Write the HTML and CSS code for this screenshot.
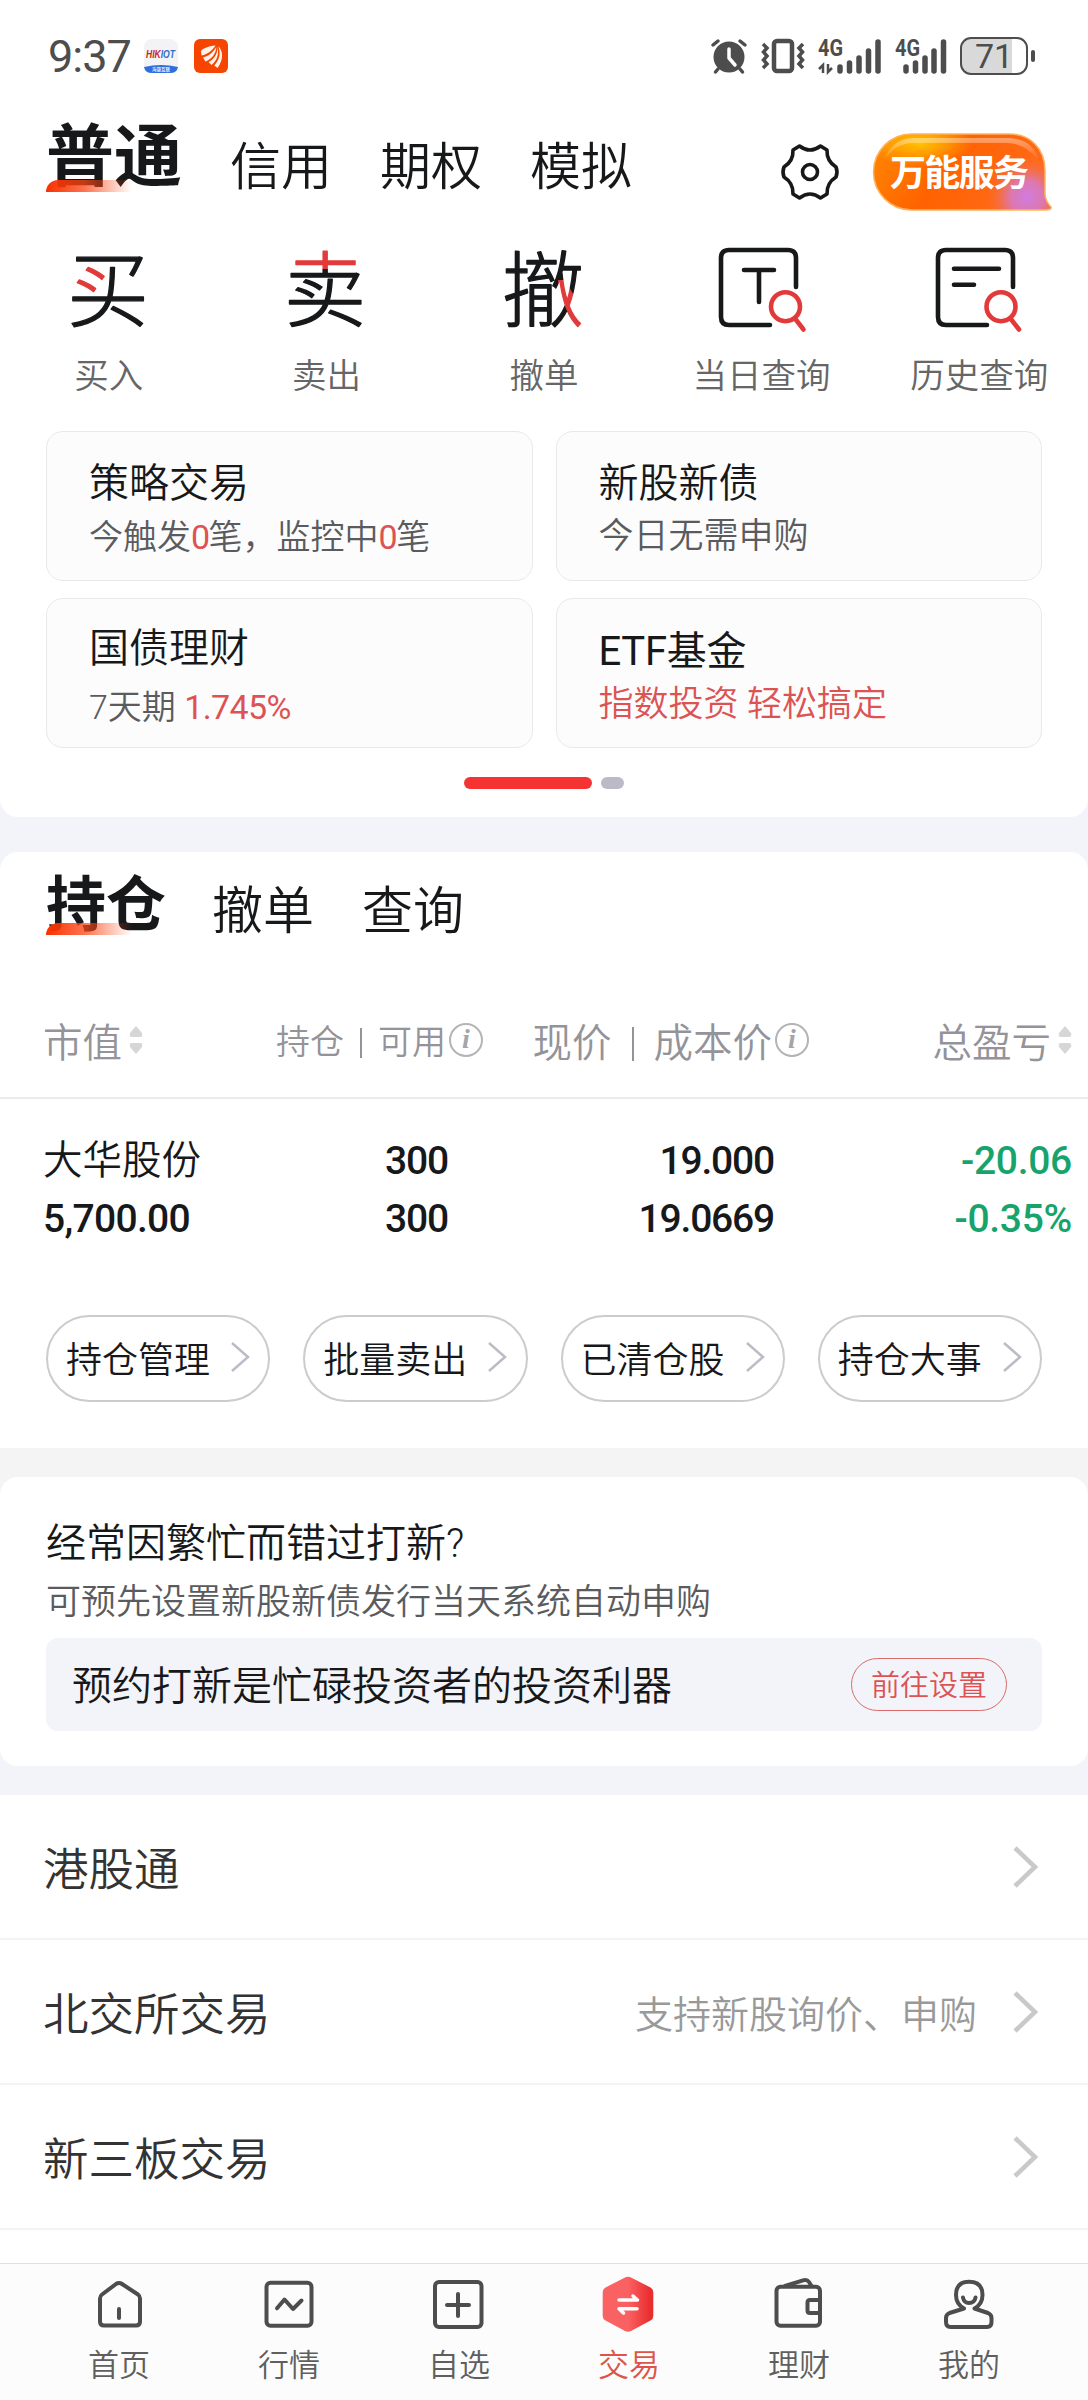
FILE: index.html
```html
<!DOCTYPE html>
<html lang="zh-CN">
<head>
    <meta charset="UTF-8">
    <meta name="viewport" content="width=device-width, initial-scale=1.0">
    <title>交易</title>
    <link rel="stylesheet" href="styles.css">
</head>
<body>
    <div class="panel top-panel">
        <div class="status-bar">
            <span class="time">9:37</span>
            <svg class="app-icon" width="34" height="34" viewBox="0 0 34 34">
                <rect width="34" height="34" rx="8" fill="#f3f3f5"/>
                <path d="M0 28 Q17 24 34 28 Q33 34 26 34 H8 Q1 34 0 28 Z" fill="#2f6fdd"/>
                <text x="2" y="19" class="hik" textLength="29" lengthAdjust="spacingAndGlyphs"><tspan fill="#c8281e">HIK</tspan><tspan fill="#2f6fc8">IOT</tspan></text>
                <text x="17" y="32" class="hik-sub" text-anchor="middle">海康互联</text>
            </svg>
            <svg class="app-icon app-orange" width="34" height="34" viewBox="0 0 34 34">
                <rect width="34" height="34" rx="6" fill="#f64500"/>
                <g fill="#fff3ec">
                    <path d="M21.500 6.500 C14 7 8 10 7 12 L7.500 16.500 C13 15.500 18 12 21.500 6.500Z"/>
                    <path d="M22.300 8 C19 13.500 15 17 9 18.500 L11.500 22.500 C18 20 22 14.500 22.300 8Z"/>
                    <path d="M23.300 8 C24 14.500 20 20.500 14.500 23 L17.500 26 C23 22 25.500 14 23.300 8Z"/>
                    <path d="M24.300 7 C29 12 30 20 23.500 29 L20.300 26.500 C26 20 26.800 14 24.300 7Z"/>
                </g>
            </svg>
            <div class="status-right">
                <svg class="alarm" width="36" height="36" viewBox="0 0 36 36" fill="none" stroke="#4d4d4d" stroke-linecap="round">
                    <circle cx="18" cy="19" r="15.500" fill="#4d4d4d" stroke="none"/>
                    <path d="M2 7 L7 3 M34 7 L29 3" stroke-width="3.500"/>
                    <path d="M7 31 L4.500 34 M29 31 L31.500 34" stroke-width="3.500"/>
                    <path d="M18 11 V20 L24 27" stroke="#fff" stroke-width="3.500" stroke-linejoin="round"/>
                </svg>
                <svg class="vibrate" width="44" height="36" viewBox="0 0 44 36" fill="none" stroke="#4d4d4d" stroke-width="4.500">
                    <rect x="13" y="3" width="18" height="30" rx="3"/>
                    <path d="M2 6 L6 10 L2.500 14 L6 18 L2.500 22 L6 26 L2 30 M42 6 L38 10 L41.500 14 L38 18 L41.500 22 L38 26 L42 30" stroke-width="3.500"/>
                </svg>
                <svg class="signal" width="63" height="36" viewBox="0 0 63 36">
                    <text x="0" y="18" class="net" textLength="25" lengthAdjust="spacingAndGlyphs">4G</text>
                    <path d="M5 35 V27 L1 31 M10 26 V34 L14 30" fill="none" stroke="#4d4d4d" stroke-width="2.500"/>
                    <path d="M22 29 V33 M31.500 25 V33 M41 20 V33 M50.500 13 V33 M60 4 V33" stroke="#4d4d4d" stroke-width="5.500" stroke-linecap="round"/>
                </svg>
                <svg class="signal-two" width="52" height="36" viewBox="0 0 52 36">
                    <text x="0" y="18" class="net" textLength="25" lengthAdjust="spacingAndGlyphs">4G</text>
                    <path d="M11 29 V33 M20.500 25 V33 M30 20 V33 M39 13 V33 M48.500 4 V33" stroke="#4d4d4d" stroke-width="5.500" stroke-linecap="round"/>
                </svg>
                <div class="battery"><span>71</span></div>
                <i class="battery-cap"></i>
            </div>
        </div>

        <div class="account-nav">
            <span class="tab tab-active">普通</span>
            <span class="tab">信用</span>
            <span class="tab">期权</span>
            <span class="tab">模拟</span>
            <svg class="gear" width="62" height="60" viewBox="-31 -30 62 60" fill="none" stroke="#17181a" stroke-width="3.600" stroke-linejoin="round">
                <path d="M-10.500 -26 Q0 -18 10.500 -26 L17 -22 Q16.500 -11 26 -5 Q28 0 26 5 Q16.500 11 17 22 L10.500 26 Q0 18 -10.500 26 L-17 22 Q-16.500 11 -26 5 Q-28 0 -26 -5 Q-16.500 -11 -17 -22 Z"/>
                <circle r="7.500"/>
            </svg>
            <svg class="service" width="180" height="78" viewBox="0 0 180 78">
                <defs>
                    <linearGradient id="pillBase" x1="0" y1="0" x2="1" y2="0.300">
                        <stop offset="0" stop-color="#ff8a00"/>
                        <stop offset="0.500" stop-color="#ff6200"/>
                        <stop offset="1" stop-color="#ff6a1c"/>
                    </linearGradient>
                    <radialGradient id="pillGold" cx="0.260" cy="0.120" r="0.300">
                        <stop offset="0" stop-color="#ffc400"/>
                        <stop offset="1" stop-color="#ffc400" stop-opacity="0"/>
                    </radialGradient>
                    <radialGradient id="pillPurple" gradientUnits="userSpaceOnUse" cx="154" cy="64" r="42">
                        <stop offset="0" stop-color="#cf7be0"/>
                        <stop offset="0.400" stop-color="#d77ac8" stop-opacity="0.850"/>
                        <stop offset="1" stop-color="#ff6a1c" stop-opacity="0"/>
                    </radialGradient>
                    <linearGradient id="pillShine" x1="0" y1="0" x2="0" y2="1">
                        <stop offset="0" stop-color="#fff" stop-opacity="0.400"/>
                        <stop offset="1" stop-color="#fff" stop-opacity="0"/>
                    </linearGradient>
                    <path id="pillShape" d="M38.500 1 H136 C158 1 172 16 172 38 V62 Q173 69 178 74 Q179 77 172 77 H38.500 A38 38 0 0 1 38.500 1 Z"/>
                </defs>
                <use href="#pillShape" fill="url(#pillBase)"/>
                <use href="#pillShape" fill="url(#pillGold)"/>
                <use href="#pillShape" fill="url(#pillPurple)"/>
                <use href="#pillShape" fill="none" stroke="#ffb25a" stroke-width="1.500"/>
                <path d="M11 28 Q18 6 40 5 H136 Q160 6 166 28 Q152 10 134 10 H40 Q22 10 11 28 Z" fill="url(#pillShine)"/>
                <text x="17" y="53" class="service-text" textLength="139">万能服务</text>
            </svg>
        </div>

        <div class="quick">
            <div class="quick-item">
                <svg width="88" height="88" viewBox="0 0 88 88">
                    <pattern id="buyInk" patternUnits="userSpaceOnUse" width="88" height="100">
                        <rect width="88" height="100" fill="#17181a"/>
                        <path d="M4 17 H36 L42 28 V47 H4 Z" fill="#e23a3a"/>
                    </pattern>
                    <text x="2" y="74" class="glyph" fill="url(#buyInk)" stroke="url(#buyInk)">买</text>
                </svg>
                <span>买入</span>
            </div>
            <div class="quick-item">
                <svg width="88" height="88" viewBox="0 0 88 88">
                    <pattern id="sellInk" patternUnits="userSpaceOnUse" width="88" height="100">
                        <rect width="88" height="100" fill="#17181a"/>
                        <rect width="88" height="23" fill="#e23a3a"/>
                    </pattern>
                    <text x="2" y="74" class="glyph" fill="url(#sellInk)" stroke="url(#sellInk)">卖</text>
                </svg>
                <span>卖出</span>
            </div>
            <div class="quick-item">
                <svg width="88" height="88" viewBox="0 0 88 88">
                    <pattern id="undoInk" patternUnits="userSpaceOnUse" width="88" height="100">
                        <rect width="88" height="100" fill="#17181a"/>
                        <path d="M58 34 L65 34 L88 74 V88 H78 L60 50 Z" fill="#e23a3a"/>
                    </pattern>
                    <text x="2" y="74" class="glyph" fill="url(#undoInk)" stroke="url(#undoInk)">撤</text>
                </svg>
                <span>撤单</span>
            </div>
            <div class="quick-item">
                <svg width="88" height="88" viewBox="0 0 88 88" fill="none" stroke="#17181a" stroke-width="4.600" stroke-linecap="round" stroke-linejoin="round">
                    <path d="M78 41 V12 Q78 4 70 4 H11 Q3 4 3 12 V71 Q3 79 11 79 H52"/>
                    <path d="M26 24 H56 M41 24 V56"/>
                    <g stroke="#e23a3a">
                        <circle cx="67.500" cy="60.700" r="14.500"/>
                        <path d="M77 72.500 L85.500 83.500"/>
                    </g>
                </svg>
                <span>当日查询</span>
            </div>
            <div class="quick-item">
                <svg width="88" height="88" viewBox="0 0 88 88" fill="none" stroke="#17181a" stroke-width="4.600" stroke-linecap="round" stroke-linejoin="round">
                    <path d="M78 41 V12 Q78 4 70 4 H11 Q3 4 3 12 V71 Q3 79 11 79 H52"/>
                    <path d="M19 22.700 H64 M19 38.700 H39"/>
                    <g stroke="#e23a3a">
                        <circle cx="66" cy="60.700" r="14.500"/>
                        <path d="M75.500 72.500 L84 83.500"/>
                    </g>
                </svg>
                <span>历史查询</span>
            </div>
        </div>

        <div class="cards">
            <div class="card card-auto">
                <div class="card-title">策略交易</div>
                <div class="card-sub">今触发<b>0</b>笔，监控中<b>0</b>笔</div>
            </div>
            <div class="card">
                <div class="card-title">新股新债</div>
                <div class="card-sub">今日无需申购</div>
            </div>
            <div class="card card-bond">
                <div class="card-title">国债理财</div>
                <div class="card-sub">7天期 <b>1.745%</b></div>
            </div>
            <div class="card card-etf">
                <div class="card-title">ETF基金</div>
                <div class="card-sub red">指数投资 轻松搞定</div>
            </div>
        </div>
        <div class="pager"><i class="on"></i><i></i></div>
    </div>

    <div class="panel hold-panel">
        <div class="hold-nav">
            <span class="tab tab-active">持仓</span>
            <span class="tab">撤单</span>
            <span class="tab">查询</span>
        </div>
        <div class="grid table-head">
            <div class="cell">市值<svg class="sort" width="14" height="28" viewBox="0 0 14 28"><path d="M7 0 L13 7 Q14 11 11 11 H3 Q0 11 1 7 Z M7 28 L13 21 Q14 17 11 17 H3 Q0 17 1 21 Z"/></svg></div>
            <div class="cell cell-small"><span>持仓<u></u>可用</span><em>i</em></div>
            <div class="cell"><span>现价<u></u>成本价</span><em>i</em></div>
            <div class="cell">总盈亏<svg class="sort" width="14" height="28" viewBox="0 0 14 28"><path d="M7 0 L13 7 Q14 11 11 11 H3 Q0 11 1 7 Z M7 28 L13 21 Q14 17 11 17 H3 Q0 17 1 21 Z"/></svg></div>
        </div>
        <div class="grid table-row">
            <div><p class="name">大华股份</p><p>5,700.00</p></div>
            <div><p>300</p><p>300</p></div>
            <div><p>19.000</p><p>19.0669</p></div>
            <div class="green"><p>-20.06</p><p>-0.35%</p></div>
        </div>
        <div class="actions">
            <a class="action">持仓管理<svg width="20" height="30" viewBox="0 0 20 30"><path d="M2 1 L18 15 L2 29"/></svg></a>
            <a class="action">批量卖出<svg width="20" height="30" viewBox="0 0 20 30"><path d="M2 1 L18 15 L2 29"/></svg></a>
            <a class="action">已清仓股<svg width="20" height="30" viewBox="0 0 20 30"><path d="M2 1 L18 15 L2 29"/></svg></a>
            <a class="action">持仓大事<svg width="20" height="30" viewBox="0 0 20 30"><path d="M2 1 L18 15 L2 29"/></svg></a>
        </div>
    </div>

    <div class="gap-grey">
        <div class="panel ipo-panel">
            <div class="ipo-title">经常因繁忙而错过打新?</div>
            <div class="ipo-sub">可预先设置新股新债发行当天系统自动申购</div>
            <div class="ipo-box">
                <span>预约打新是忙碌投资者的投资利器</span>
                <a class="ipo-btn">前往设置</a>
            </div>
        </div>
    </div>

    <div class="list">
        <div class="list-row"><span>港股通</span><svg width="28" height="42" viewBox="0 0 28 42"><path d="M3 2 L23 21 L3 40"/></svg></div>
        <div class="list-row"><span>北交所交易</span><small>支持新股询价、申购</small><svg width="28" height="42" viewBox="0 0 28 42"><path d="M3 2 L23 21 L3 40"/></svg></div>
        <div class="list-row"><span>新三板交易</span><svg width="28" height="42" viewBox="0 0 28 42"><path d="M3 2 L23 21 L3 40"/></svg></div>
    </div>

    <div class="tabbar">
        <div class="tabbar-item">
            <svg width="60" height="60" viewBox="0 0 60 60">
                <path d="M30 8 Q31.500 8 33 9 L49 19.500 Q51 21 51 23.500 V46.500 Q51 50.500 47 50.500 H15 Q11 50.500 11 46.500 V23.500 Q11 21 13 19.500 L27 9 Q28.500 8 30 8 Z M30 34 V43"/>
            </svg>
            <span>首页</span>
        </div>
        <div class="tabbar-item">
            <svg width="60" height="60" viewBox="0 0 60 60">
                <rect x="7.500" y="7.700" width="45" height="43" rx="4"/>
                <path d="M18 33.300 L25.500 24.500 L34 34 L42.500 25.500"/>
            </svg>
            <span>行情</span>
        </div>
        <div class="tabbar-item">
            <svg width="60" height="60" viewBox="0 0 60 60">
                <rect x="6" y="7" width="46.500" height="45" rx="4"/>
                <path d="M29 19 V41 M18 30 H40"/>
            </svg>
            <span>自选</span>
        </div>
        <div class="tabbar-item active">
            <svg width="60" height="60" viewBox="0 0 60 60">
                <linearGradient id="hexFill" x1="0" y1="0" x2="1" y2="0">
                    <stop offset="0.500" stop-color="#fa6163"/>
                    <stop offset="0.950" stop-color="#e92c2d"/>
                </linearGradient>
                <path class="solid" d="M26 2.500 Q29 1 32 2.500 L51.500 12.500 Q54.300 14 54.300 17 V41 Q54.300 44 51.500 45.500 L32 56 Q29 57.500 26 56 L6.500 45.500 Q3.700 44 3.700 41 V17 Q3.700 14 6.500 12.500 Z" fill="url(#hexFill)"/>
                <path class="swap" d="M20 25 H38.500 L34 21 M38 33.700 H20 L24.500 38"/>
            </svg>
            <span>交易</span>
        </div>
        <div class="tabbar-item">
            <svg width="60" height="60" viewBox="0 0 60 60">
                <rect x="7.500" y="11.700" width="43.500" height="39" rx="4"/>
                <path d="M16 11 L34 5.300 Q38 4 40 7 L42.500 11 M51 25 H41 Q38.500 25 38.500 27.500 V35.500 Q38.500 38 41 38 H51"/>
            </svg>
            <span>理财</span>
        </div>
        <div class="tabbar-item">
            <svg width="60" height="60" viewBox="0 0 60 60">
                <path d="M25 33.500 Q17 29 17 20 Q17 6.700 30 6.700 Q43.500 6.700 43.500 20 Q43.500 29 35.500 33.500 L49 38 Q52.500 39.500 52.500 43 V47 Q52.500 52 48 52 H11.500 Q7 52 7 47 V43 Q7 39.500 10.500 38 L25 33.500 M24 22.500 Q25 28 30 28 Q35.500 28 36.500 22.500"/>
            </svg>
            <span>我的</span>
        </div>
    </div>
</body>
</html>
```
FILE: styles.css
```css
* { box-sizing: border-box; }
body { margin: 0; width: 1088px; height: 2400px; background: #f3f4f9; color: #17181a; font-family: Roboto, "Noto Sans CJK SC", sans-serif; font-weight: 350; display: flex; flex-direction: column; }
p { margin: 0; }
svg { overflow: visible; }
.panel { background: #fff; }

/* status bar */
.top-panel { height: 817px; border-radius: 0 0 18px 18px; }
.status-bar { height: 112px; padding: 0 53px 0 48px; display: flex; align-items: center; }
.time { width: 96px; font-size: 45px; font-weight: 400; letter-spacing: -1px; color: #4d4d4d; line-height: 60px; padding-top: 2px; }
.app-orange { margin-left: 16px; }
.hik { font: italic 900 11px "Liberation Sans", sans-serif; }
.hik-sub { font: 500 4.5px "Noto Sans CJK SC", sans-serif; fill: #fff; }
.status-right { margin-left: auto; display: flex; align-items: center; }
.vibrate { margin-left: 14px; }
.signal { margin-left: 13px; }
.signal-two { margin-left: 14px; }
.net { font: 700 23px Roboto, sans-serif; fill: #4d4d4d; }
.battery { width: 68px; height: 38px; margin-left: 13px; border: 2.5px solid #4d4d4d; border-radius: 11px; background: linear-gradient(90deg, #d9d9d9 78%, #fff 78%); text-align: center; }
.battery span { display: block; font-size: 34px; font-weight: 400; line-height: 34px; color: #4d4d4d; }
.battery-cap { width: 4px; height: 12px; margin-left: 3px; border-radius: 2px; background: #4d4d4d; }

/* tabs */
.account-nav { height: 100px; padding: 0 35px 0 46px; display: flex; align-items: flex-end; }
.tab { font-size: 51px; line-height: 60px; margin-right: 48px; }
.tab-active { position: relative; font-weight: 700; }
.tab-active::after { content: ""; position: absolute; left: 0; width: 86px; height: 12px; border-radius: 12px 0 0 0; background: linear-gradient(90deg, #fa3000, rgba(250, 70, 20, .75) 45%, rgba(250, 90, 50, 0)); }
.account-nav .tab { padding-bottom: 14px; height: 74px; }
.account-nav .tab-active { font-size: 68px; padding: 0; line-height: 76px; height: 92px; margin-right: 48px; }
.account-nav .tab-active::after { top: 60px; }
.gear { margin-left: auto; margin-bottom: 10px; }
.service { margin-left: 32px; margin-bottom: 1px; }
.service-text { font: 700 36px "Noto Sans CJK SC", sans-serif; fill: #fff; }

/* shortcuts */
.quick { display: grid; grid-template-columns: repeat(5, 1fr); padding-top: 34px; height: 219px; }
.quick-item { display: flex; flex-direction: column; align-items: center; font-size: 34.5px; line-height: 40px; color: #666; gap: 22px; }
.quick svg { display: block; }
.glyph { font: 300 82px "Noto Sans CJK SC", sans-serif; stroke-width: 1.3; stroke-linejoin: round; }

.cards { display: grid; grid-template-columns: 1fr 1fr; gap: 17px 23px; padding: 0 46px; }
.card { height: 150px; padding: 28px 0 0 42px; border: 1.5px solid #e9e9ea; border-radius: 17px; background: #fcfcfc; }
.card-title { font-size: 40px; line-height: 48px; }
.card-sub { font-size: 35px; line-height: 42px; margin-top: 8px; color: #5a5b5e; }
.card b { font-weight: 400; letter-spacing: -.6px; color: #dc5353; }
.card-auto .card-sub { font-size: 34px; }
.card-auto b { letter-spacing: -1.5px; }
.card-bond { padding-top: 26px; }
.card-bond .card-sub { font-size: 34px; margin-top: 13px; }
.card-etf { padding-top: 29px; }
.card-etf .card-title { font-weight: 400; letter-spacing: -.3px; }
.card .red { color: #dc5353; }
.pager { display: flex; gap: 9px; justify-content: center; padding-top: 29px; }
.pager i { width: 23px; height: 12px; border-radius: 6px; background: #bbbbc7; }
.pager .on { width: 128px; background: #f53333; }

/* holdings */
.hold-panel { height: 596px; margin-top: 35px; border-radius: 18px 18px 0 0; }
.hold-nav { height: 136px; padding: 0 46px; display: flex; }
.hold-nav .tab { padding-top: 30px; }
.hold-nav .tab-active { font-size: 60px; padding-top: 24px; margin-right: 46px; }
.hold-nav .tab-active::after { top: 71px; }
.grid { display: grid; padding: 0 16px 0 43px; }
.table-head { height: 111px; grid-template-columns: 183px 257px 326px 1fr; align-items: center; border-bottom: 2px solid #ebebeb; color: #939399; font-size: 39.5px; padding-bottom: 6px; }
.cell { display: flex; align-items: center; justify-content: flex-end; white-space: nowrap; }
.cell:first-child { justify-content: flex-start; }
.cell-small { font-size: 34px; }
.cell u { display: inline-block; width: 2px; height: 34px; margin: 0 20px; background: #939399; vertical-align: -4px; }
.cell-small u { height: 30px; margin: 0 16px; }
.cell em { width: 34px; height: 34px; margin-left: 3px; border: 2px solid #b4b4b6; border-radius: 50%; font: italic 700 28px/28px "Liberation Serif", serif; text-align: center; color: #a5a5a8; }
.sort { margin-left: 7px; fill: #d6d6d8; }
.table-row { height: 216px; padding-top: 33px; grid-template-columns: 183px 222px 326px 1fr; font-size: 39px; font-weight: 500; line-height: 58px; text-align: right; letter-spacing: -1.2px; }
.table-row div:first-child { text-align: left; white-space: nowrap; letter-spacing: -.7px; }
.table-row .name { font-size: 39.5px; font-weight: 350; letter-spacing: 0; }
.table-row .green { color: #17a36c; letter-spacing: -.3px; }
.actions { display: grid; grid-template-columns: repeat(4, 1fr); gap: 33px; padding: 0 46px; }
.action { height: 87px; border: 2px solid #cbcbd0; border-radius: 44px; display: flex; align-items: center; padding: 0 0 3px 18px; font-size: 36px; }
.action svg { margin-left: 20px; fill: none; stroke: #bcbcc6; stroke-width: 2.5; }

/* subscription reminder */
.gap-grey { background: linear-gradient(#f4f4f4 60px, #f3f4f9 60px); padding-top: 29px; }
.ipo-panel { height: 289px; border-radius: 18px; padding: 42px 46px 0; }
.ipo-title { font-size: 40px; line-height: 50px; }
.ipo-sub { font-size: 35px; line-height: 44px; margin-top: 12px; color: #5a5b5e; }
.ipo-box { height: 93px; margin-top: 13px; padding: 0 35px 0 26px; border-radius: 12px; background: #f3f4f9; display: flex; align-items: center; justify-content: space-between; font-size: 40px; }
.ipo-box span { padding-bottom: 4px; }
.ipo-btn { width: 156px; height: 53px; border: 1.5px solid #d96a6a; border-radius: 27px; font-size: 29px; line-height: 54px; text-align: center; color: #dc5353; }

/* market list */
.list { margin-top: 29px; flex: 1; background: #fff; }
.list-row { height: 145px; padding: 0 48px 0 43px; border-bottom: 2px solid #f3f3f4; display: flex; align-items: center; font-size: 45.5px; color: #333; }
.list-row span { padding-bottom: 2px; }
.list-row small { margin-left: auto; font-size: 38px; color: #999; padding-bottom: 1px; }
.list-row svg { margin-left: auto; fill: none; stroke: #c9c9c9; stroke-width: 4.5; }
.list-row small + svg { margin-left: 35px; }

/* bottom tab bar */
.tabbar { height: 137px; padding: 11px 34px 0; border-top: 1px solid #e0e0e0; background: #fcfcfc; display: grid; grid-template-columns: repeat(6, 1fr); }
.tabbar-item { display: flex; flex-direction: column; align-items: center; font-size: 31px; line-height: 38px; color: #5f5f5f; gap: 12px; }
.tabbar svg { fill: none; stroke: #4d4d4d; stroke-width: 4; stroke-linecap: round; stroke-linejoin: round; }
.tabbar .solid { stroke: none; }
.tabbar .swap { stroke: #fff; stroke-width: 3.5; }
.active { color: #dd5548; }
```
